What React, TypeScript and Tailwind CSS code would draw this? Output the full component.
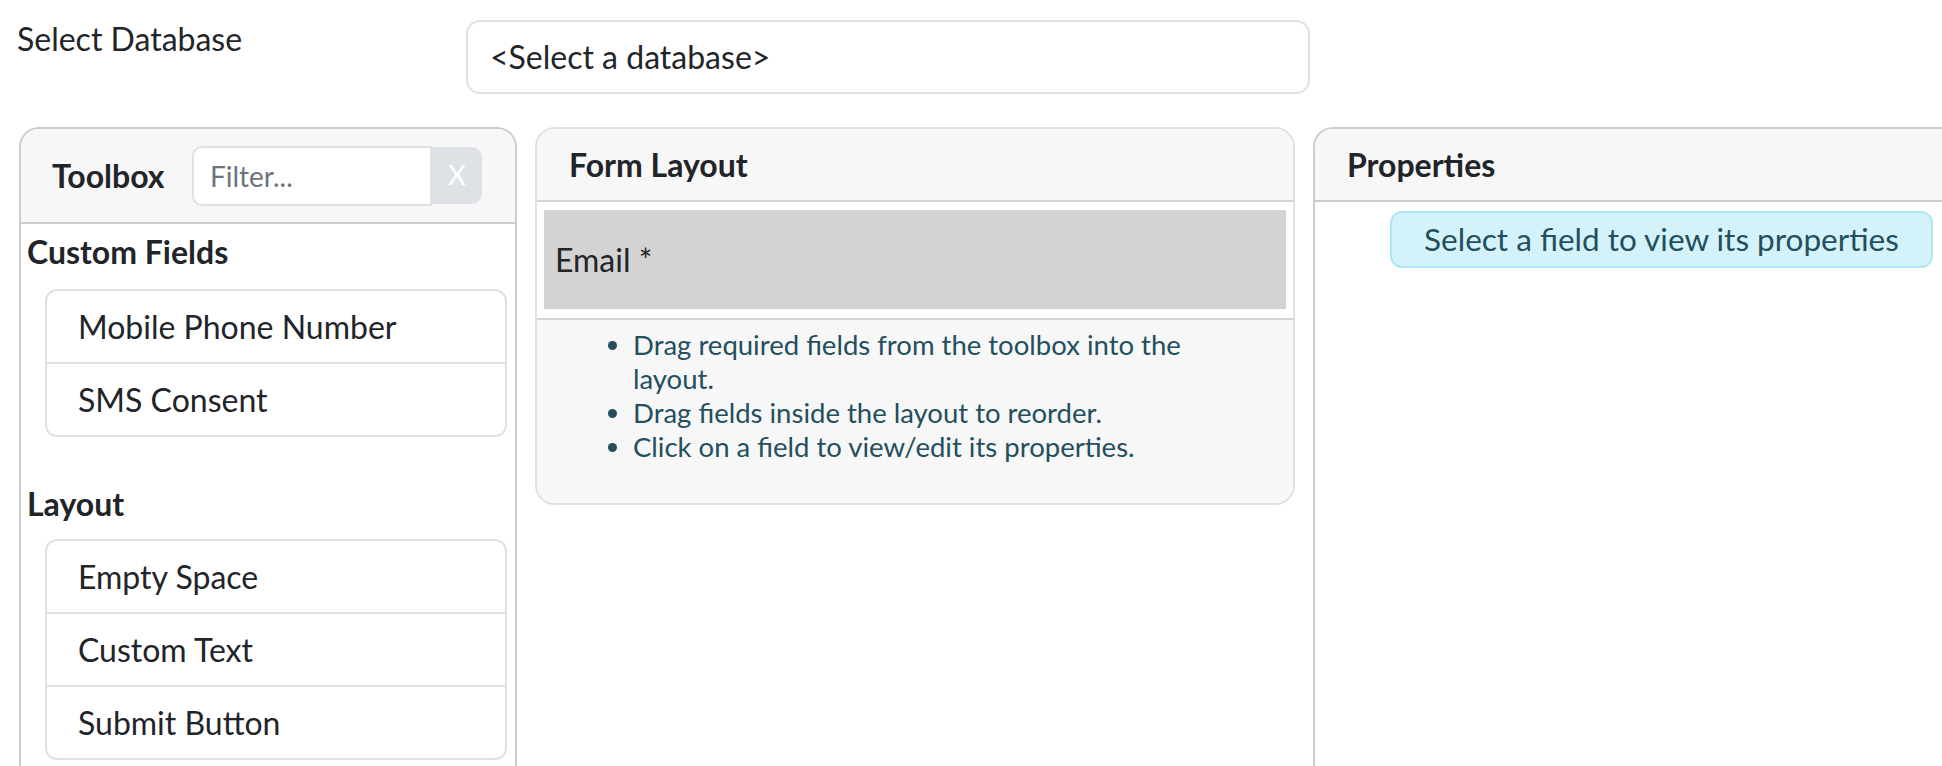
export default function App() {
  return (
    <div className="w-[1942px] h-[766px] overflow-hidden bg-white font-['Lato',sans-serif] text-[#212529]">
      {/* database picker */}
      <div className="flex items-start pt-[19px] pl-[17px]">
        <label className="w-[449px] text-[32px] leading-[40px]">Select Database</label>
        <div className="w-[844px] h-[74px] mt-[1px] flex items-center border-2 border-[#dee2e6] rounded-[14px] pl-[22px] text-[32px]">
          &lt;Select a database&gt;
        </div>
      </div>

      <div className="flex items-start gap-[18px] pl-[19px] mt-[33px]">
        {/* toolbox */}
        <div className="w-[498px] h-[700px] shrink-0 border-2 border-b-0 border-[#cccccc] rounded-t-[20px] overflow-hidden">
          <div className="h-[95px] bg-[#f7f7f7] border-b-2 border-[#cccccc] flex items-center pl-[31px]">
            <span className="w-[140px] text-[32px] font-bold">Toolbox</span>
            <div className="flex items-center">
              <input
                placeholder="Filter..."
                className="w-[240px] h-[60px] border-2 border-[#dee2e6] rounded-l-[10px] bg-white px-[16px] text-[28px] outline-none placeholder:text-[#6c757d]"
              />
              <button className="w-[50px] h-[57px] bg-[#dee2e6] rounded-r-[10px] text-white text-[27px]">X</button>
            </div>
          </div>
          <div className="pt-[9px] pl-[6px]">
            <h3 className="text-[32px] leading-[38px] font-bold">Custom Fields</h3>
            <ToolList items={['Mobile Phone Number', 'SMS Consent']} className="mt-[18px]" />
            <h3 className="mt-[48px] text-[32px] leading-[38px] font-bold">Layout</h3>
            <ToolList items={['Empty Space', 'Custom Text', 'Submit Button']} className="mt-[16px]" />
          </div>
        </div>

        {/* form layout */}
        <div className="w-[760px] shrink-0 border-2 border-[#dee2e6] rounded-[20px] overflow-hidden">
          <div className="h-[73px] bg-[#f7f7f7] border-b-2 border-[#d3d3d3] flex items-center pl-[32px]">
            <span className="text-[32px] font-bold">Form Layout</span>
          </div>
          <div className="bg-white pt-[8px] pb-[9px] px-[7px] border-b-2 border-[#d3d3d3]">
            <div className="h-[99px] bg-[#d3d3d3] flex items-center pl-[11px] text-[32px]">Email *</div>
          </div>
          <div className="bg-[#f7f7f7] pt-[8px] pb-[39px]">
            <ul className="list-disc pl-[96px] pr-[70px] text-[27.5px] leading-[34px] text-[#234f5e]">
              <li>Drag required fields from the toolbox into the layout.</li>
              <li>Drag fields inside the layout to reorder.</li>
              <li>Click on a field to view/edit its properties.</li>
            </ul>
          </div>
        </div>

        {/* properties */}
        <div className="w-[760px] h-[700px] shrink-0 border-2 border-b-0 border-[#cccccc] rounded-t-[20px] overflow-hidden">
          <div className="h-[73px] bg-[#f7f7f7] border-b-2 border-[#cccccc] flex items-center pl-[32px]">
            <span className="text-[32px] font-bold">Properties</span>
          </div>
          <div className="pt-[9px] pl-[75px]">
            <div className="w-[543px] h-[57px] flex items-center justify-center border-2 border-[#aee8f6] rounded-[12px] bg-[#d4f2fa] text-[31.5px] text-[#234f5e]">
              Select a field to view its properties
            </div>
          </div>
        </div>
      </div>
    </div>
  )
}

function ToolList({ items, className }: { items: string[]; className?: string }) {
  return (
    <div className={`ml-[18px] w-[462px] border-2 border-[#dee2e6] rounded-[12px] ${className ?? ''}`}>
      {items.map((item, i) => (
        <div
          key={item}
          className={`flex items-center pl-[31px] text-[32px] ${i > 0 ? 'h-[73px] border-t-2 border-[#dee2e6]' : 'h-[71px]'}`}
        >
          {item}
        </div>
      ))}
    </div>
  )
}
